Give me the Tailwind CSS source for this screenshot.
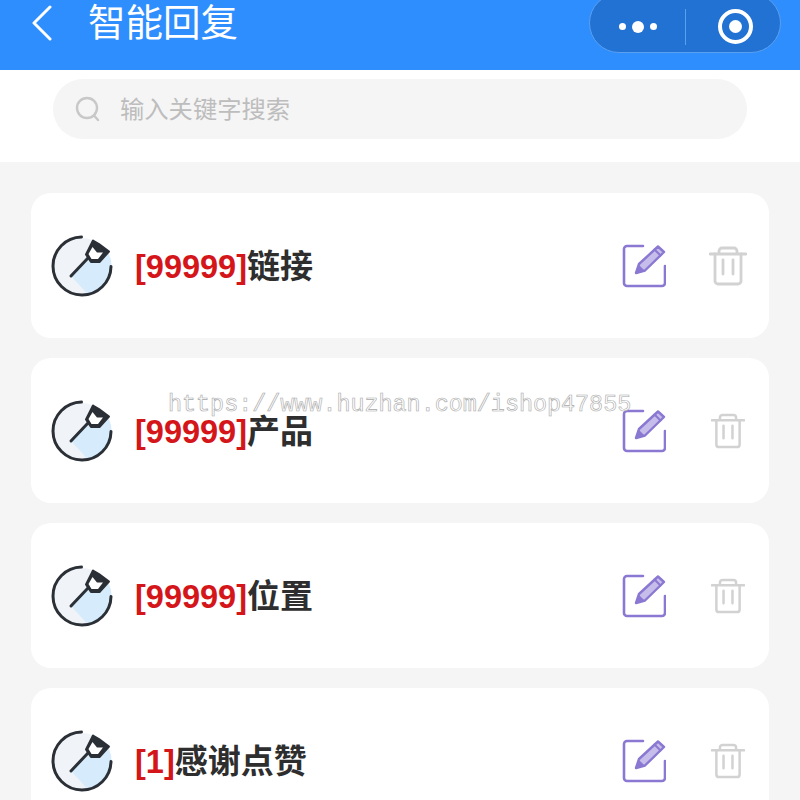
<!DOCTYPE html>
<html lang="zh">
<head>
  <meta charset="UTF-8">
  <title>智能回复</title>
  <script src="https://cdn.jsdelivr.net/npm/@tailwindcss/browser@4"></script>
</head>
<body class="relative w-[800px] h-[800px] overflow-hidden bg-[#f5f5f5] font-['Liberation_Sans','Noto_Sans_CJK_SC',sans-serif]">
  <!-- header -->
  <header class="h-[70px] bg-[#2f8efe] flex items-start overflow-hidden text-white">
    <svg class="ml-[30px] mt-[5px] w-[24px] h-[36px]" viewBox="0 0 24 36" fill="none" stroke="#fff" stroke-width="3" stroke-linecap="round" stroke-linejoin="round"><path d="M20 2 L4 18 L20 34"/></svg>
    <h1 class="ml-[34px] mt-[1px] text-[37.5px] leading-[44px] font-normal">智能回复</h1>
    <div class="ml-auto mr-[19px] -mt-[7px] w-[192px] h-[60px] rounded-[30px] bg-[#2272d4] border border-[#5a9ff0] flex items-center">
      <div class="w-[96px] h-[36px] mt-[7px] flex items-center justify-center gap-[6px] border-r border-[#5a9ff0]">
        <span class="w-[7px] h-[7px] rounded-full bg-white"></span>
        <span class="w-[12px] h-[12px] rounded-full bg-white"></span>
        <span class="w-[7px] h-[7px] rounded-full bg-white"></span>
      </div>
      <div class="flex-1 flex justify-center mt-[7px] pl-[4px]">
        <span class="w-[35px] h-[35px] rounded-full border-[4px] border-white flex items-center justify-center">
          <span class="w-[13px] h-[13px] rounded-full bg-white"></span>
        </span>
      </div>
    </div>
  </header>

  <!-- search -->
  <div class="h-[92px] bg-white pt-[9px] px-[53px]">
    <div class="h-[60px] rounded-[30px] bg-[#f5f5f5] flex items-center pl-[22px]">
      <svg class="w-[26px] h-[26px]" viewBox="0 0 26 26" fill="none" stroke="#c8c8c8" stroke-width="2.4" stroke-linecap="round"><circle cx="12" cy="12" r="10"/><path d="M19.5 20 L23 24"/></svg>
      <span class="ml-[19px] mt-[2px] text-[24.3px] leading-none text-[#bdbdbd]">输入关键字搜索</span>
    </div>
  </div>

  <!-- list -->
  <main class="pt-[31px] px-[31px] flex flex-col gap-[20px]">
    <div class="h-[145px] rounded-[20px] bg-white flex items-center pl-[19px] pr-[22px]">
      <svg class="w-[64px] h-[64px] shrink-0" viewBox="0 0 64 64" fill="none">
        <circle cx="32" cy="32" r="28" fill="#f0f3f8"/>
        <path d="M38 23 L21.7 42.7 L37 59.5 A28 28 0 0 0 59 20 Z" fill="#d6ecfc"/>
        <path d="M31.5 3 A29 29 0 1 0 61 32.5" stroke="#2b2f36" stroke-width="3" stroke-linecap="round"/>
        <path d="M21 42 L38 24" stroke="#2b2f36" stroke-width="3" stroke-linecap="round"/>
        <path d="M36 20.5 L43 6.5 L49 10 L59 17.5 L49.5 28 L41 28 Z" fill="#2b2f36" stroke="#2b2f36" stroke-width="2" stroke-linejoin="round"/>
        <path d="M38.5 20 L42.5 13 L47 18.5 L53 18.5 L48 25 L41.5 25 Z" fill="#fff"/>
      </svg>
      <p class="ml-[21px] mt-[2px] text-[32.5px] leading-none font-bold text-[#2e2e2e]"><span class="text-[#d4161a]">[99999]</span><span class="text-[33px]">链接</span></p>
      <svg class="ml-auto w-[44px] h-[44px] shrink-0" viewBox="0 0 44 44" fill="none" stroke="#8a78d2" stroke-width="2.6" stroke-linecap="round" stroke-linejoin="round">
        <path d="M21 2 H5 A3 3 0 0 0 2 5 V39 A3 3 0 0 0 5 42 H40 A3 3 0 0 0 43 39 V22"/>
        <path d="M14 29 L17 20 L36 2.5 L42 8 L23 26.5 Z" fill="#c7bdea" stroke-width="2.4"/>
        <path d="M32.5 5.5 L38.5 11.5" stroke-width="2"/>
        <path d="M14 29 L17 22 L21 26 Z" fill="#8a78d2" stroke-width="1.5"/>
      </svg>
      <svg class="ml-[43px] w-[38px] h-[40px] shrink-0" viewBox="0 0 38 40" fill="none" stroke="#d2d2d2" stroke-width="2.8" stroke-linecap="round" stroke-linejoin="round">
        <path d="M1 8 H37 M10 8 V5 A3 3 0 0 1 13 2 H25 A3 3 0 0 1 28 5 V8"/>
        <path d="M6 8 V35 A3 3 0 0 0 9 38 H29 A3 3 0 0 0 32 35 V8"/>
        <path d="M14 14 V28 M24 14 V28"/>
      </svg>
    </div>

    <div class="h-[145px] rounded-[20px] bg-white flex items-center pl-[19px] pr-[24px]">
      <svg class="w-[64px] h-[64px] shrink-0" viewBox="0 0 64 64" fill="none">
        <circle cx="32" cy="32" r="28" fill="#f0f3f8"/>
        <path d="M38 23 L21.7 42.7 L37 59.5 A28 28 0 0 0 59 20 Z" fill="#d6ecfc"/>
        <path d="M31.5 3 A29 29 0 1 0 61 32.5" stroke="#2b2f36" stroke-width="3" stroke-linecap="round"/>
        <path d="M21 42 L38 24" stroke="#2b2f36" stroke-width="3" stroke-linecap="round"/>
        <path d="M36 20.5 L43 6.5 L49 10 L59 17.5 L49.5 28 L41 28 Z" fill="#2b2f36" stroke="#2b2f36" stroke-width="2" stroke-linejoin="round"/>
        <path d="M38.5 20 L42.5 13 L47 18.5 L53 18.5 L48 25 L41.5 25 Z" fill="#fff"/>
      </svg>
      <p class="ml-[21px] mt-[2px] text-[32.5px] leading-none font-bold text-[#2e2e2e]"><span class="text-[#d4161a]">[99999]</span><span class="text-[33px]">产品</span></p>
      <svg class="ml-auto w-[44px] h-[44px] shrink-0" viewBox="0 0 44 44" fill="none" stroke="#8a78d2" stroke-width="2.6" stroke-linecap="round" stroke-linejoin="round">
        <path d="M21 2 H5 A3 3 0 0 0 2 5 V39 A3 3 0 0 0 5 42 H40 A3 3 0 0 0 43 39 V22"/>
        <path d="M14 29 L17 20 L36 2.5 L42 8 L23 26.5 Z" fill="#c7bdea" stroke-width="2.4"/>
        <path d="M32.5 5.5 L38.5 11.5" stroke-width="2"/>
        <path d="M14 29 L17 22 L21 26 Z" fill="#8a78d2" stroke-width="1.5"/>
      </svg>
      <svg class="ml-[45px] w-[34px] h-[38px] shrink-0" viewBox="0 0 38 40" fill="none" stroke="#d2d2d2" stroke-width="2.8" stroke-linecap="round" stroke-linejoin="round">
        <path d="M1 8 H37 M10 8 V5 A3 3 0 0 1 13 2 H25 A3 3 0 0 1 28 5 V8"/>
        <path d="M6 8 V35 A3 3 0 0 0 9 38 H29 A3 3 0 0 0 32 35 V8"/>
        <path d="M14 14 V28 M24 14 V28"/>
      </svg>
    </div>

    <div class="h-[145px] rounded-[20px] bg-white flex items-center pl-[19px] pr-[24px]">
      <svg class="w-[64px] h-[64px] shrink-0" viewBox="0 0 64 64" fill="none">
        <circle cx="32" cy="32" r="28" fill="#f0f3f8"/>
        <path d="M38 23 L21.7 42.7 L37 59.5 A28 28 0 0 0 59 20 Z" fill="#d6ecfc"/>
        <path d="M31.5 3 A29 29 0 1 0 61 32.5" stroke="#2b2f36" stroke-width="3" stroke-linecap="round"/>
        <path d="M21 42 L38 24" stroke="#2b2f36" stroke-width="3" stroke-linecap="round"/>
        <path d="M36 20.5 L43 6.5 L49 10 L59 17.5 L49.5 28 L41 28 Z" fill="#2b2f36" stroke="#2b2f36" stroke-width="2" stroke-linejoin="round"/>
        <path d="M38.5 20 L42.5 13 L47 18.5 L53 18.5 L48 25 L41.5 25 Z" fill="#fff"/>
      </svg>
      <p class="ml-[21px] mt-[2px] text-[32.5px] leading-none font-bold text-[#2e2e2e]"><span class="text-[#d4161a]">[99999]</span><span class="text-[33px]">位置</span></p>
      <svg class="ml-auto w-[44px] h-[44px] shrink-0" viewBox="0 0 44 44" fill="none" stroke="#8a78d2" stroke-width="2.6" stroke-linecap="round" stroke-linejoin="round">
        <path d="M21 2 H5 A3 3 0 0 0 2 5 V39 A3 3 0 0 0 5 42 H40 A3 3 0 0 0 43 39 V22"/>
        <path d="M14 29 L17 20 L36 2.5 L42 8 L23 26.5 Z" fill="#c7bdea" stroke-width="2.4"/>
        <path d="M32.5 5.5 L38.5 11.5" stroke-width="2"/>
        <path d="M14 29 L17 22 L21 26 Z" fill="#8a78d2" stroke-width="1.5"/>
      </svg>
      <svg class="ml-[45px] w-[34px] h-[38px] shrink-0" viewBox="0 0 38 40" fill="none" stroke="#d2d2d2" stroke-width="2.8" stroke-linecap="round" stroke-linejoin="round">
        <path d="M1 8 H37 M10 8 V5 A3 3 0 0 1 13 2 H25 A3 3 0 0 1 28 5 V8"/>
        <path d="M6 8 V35 A3 3 0 0 0 9 38 H29 A3 3 0 0 0 32 35 V8"/>
        <path d="M14 14 V28 M24 14 V28"/>
      </svg>
    </div>

    <div class="h-[145px] rounded-[20px] bg-white flex items-center pl-[19px] pr-[24px]">
      <svg class="w-[64px] h-[64px] shrink-0" viewBox="0 0 64 64" fill="none">
        <circle cx="32" cy="32" r="28" fill="#f0f3f8"/>
        <path d="M38 23 L21.7 42.7 L37 59.5 A28 28 0 0 0 59 20 Z" fill="#d6ecfc"/>
        <path d="M31.5 3 A29 29 0 1 0 61 32.5" stroke="#2b2f36" stroke-width="3" stroke-linecap="round"/>
        <path d="M21 42 L38 24" stroke="#2b2f36" stroke-width="3" stroke-linecap="round"/>
        <path d="M36 20.5 L43 6.5 L49 10 L59 17.5 L49.5 28 L41 28 Z" fill="#2b2f36" stroke="#2b2f36" stroke-width="2" stroke-linejoin="round"/>
        <path d="M38.5 20 L42.5 13 L47 18.5 L53 18.5 L48 25 L41.5 25 Z" fill="#fff"/>
      </svg>
      <p class="ml-[21px] mt-[2px] text-[32.5px] leading-none font-bold text-[#2e2e2e]"><span class="text-[#d4161a]">[1]</span><span class="text-[33px]">感谢点赞</span></p>
      <svg class="ml-auto w-[44px] h-[44px] shrink-0" viewBox="0 0 44 44" fill="none" stroke="#8a78d2" stroke-width="2.6" stroke-linecap="round" stroke-linejoin="round">
        <path d="M21 2 H5 A3 3 0 0 0 2 5 V39 A3 3 0 0 0 5 42 H40 A3 3 0 0 0 43 39 V22"/>
        <path d="M14 29 L17 20 L36 2.5 L42 8 L23 26.5 Z" fill="#c7bdea" stroke-width="2.4"/>
        <path d="M32.5 5.5 L38.5 11.5" stroke-width="2"/>
        <path d="M14 29 L17 22 L21 26 Z" fill="#8a78d2" stroke-width="1.5"/>
      </svg>
      <svg class="ml-[45px] w-[34px] h-[38px] shrink-0" viewBox="0 0 38 40" fill="none" stroke="#d2d2d2" stroke-width="2.8" stroke-linecap="round" stroke-linejoin="round">
        <path d="M1 8 H37 M10 8 V5 A3 3 0 0 1 13 2 H25 A3 3 0 0 1 28 5 V8"/>
        <path d="M6 8 V35 A3 3 0 0 0 9 38 H29 A3 3 0 0 0 32 35 V8"/>
        <path d="M14 14 V28 M24 14 V28"/>
      </svg>
    </div>
  </main>

  <!-- watermark over the page -->
  <div class="absolute left-[168px] top-[390px] text-[23.4px] leading-[30px] whitespace-nowrap font-['Liberation_Mono',monospace] text-white/70 [-webkit-text-stroke:0.6px_#a8a8a8]">https://www.huzhan.com/ishop47855</div>
</body>
</html>
